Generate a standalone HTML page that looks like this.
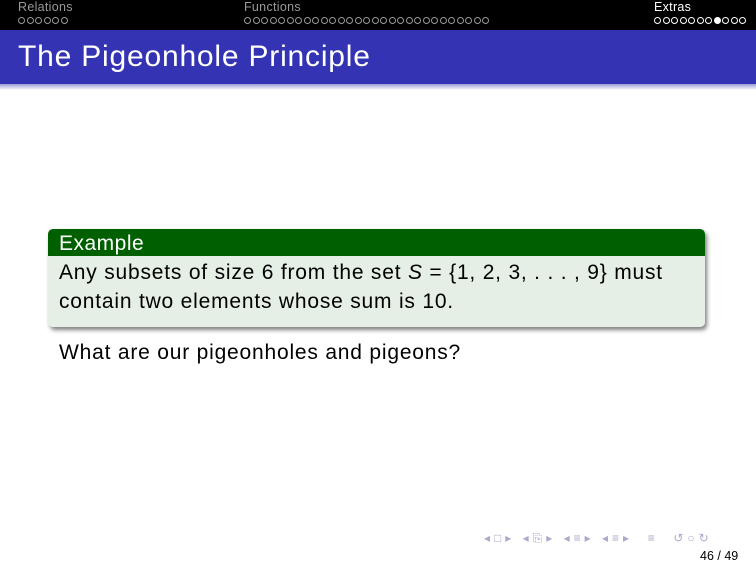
<!DOCTYPE html>
<html><head><style>
body{margin:0;width:756px;height:567px;background:#fff;position:relative;overflow:hidden;font-family:"Liberation Sans",sans-serif;}
.top{position:absolute;left:0;top:0;width:756px;height:30px;background:#000;}
.nav{position:absolute;font-size:12.5px;color:#999;line-height:13px;letter-spacing:0.3px;}
.dots{position:absolute;top:17px;display:flex;}
.dots i{display:block;width:5px;height:5px;border:1px solid #999;border-radius:50%;margin-right:1.5px;}
.dots.w i{border-color:#fff;}
.dots i.f{background:#fff;}
.title{position:absolute;left:0;top:30px;width:756px;height:54px;background:#3333b3;}
.title span{position:absolute;left:18px;top:10px;font-size:30px;color:#fff;letter-spacing:0.8px;}
.shadow{position:absolute;left:0;top:84px;width:756px;height:6px;background:linear-gradient(#9b9bd6,#fff);}
.blk{position:absolute;left:48px;top:229px;width:657px;height:98px;border-radius:5px;box-shadow:2px 3px 4px rgba(0,0,0,.5);overflow:hidden;}
.bh{height:27px;background:#006000;color:#fff;font-size:21px;line-height:29px;padding-left:11px;letter-spacing:0.5px;}
.bb{height:71px;background:#e5efe5;color:#000;font-size:21px;line-height:29px;padding:2px 11px 0;letter-spacing:0.8px;}
.q{position:absolute;left:59px;top:341px;font-size:21px;letter-spacing:0.8px;}
.ic{position:absolute;left:484px;top:531px;font-size:12px;color:#aac;letter-spacing:4px;}
.pg{position:absolute;left:700px;top:549px;font-size:12.5px;}
</style></head><body>
<div class="top"></div>
<div class="nav" style="left:18px;top:1px">Relations</div>
<div class="dots" style="left:18px"><i></i><i></i><i></i><i></i><i></i><i></i></div>
<div class="nav" style="left:244px;top:1px">Functions</div>
<div class="dots" style="left:244px"><i></i><i></i><i></i><i></i><i></i><i></i><i></i><i></i><i></i><i></i><i></i><i></i><i></i><i></i><i></i><i></i><i></i><i></i><i></i><i></i><i></i><i></i><i></i><i></i><i></i><i></i><i></i><i></i><i></i></div>
<div class="nav" style="left:654px;top:1px;color:#fff">Extras</div>
<div class="dots w" style="left:654px"><i></i><i></i><i></i><i></i><i></i><i></i><i></i><i class="f"></i><i></i><i></i><i></i></div>
<div class="title"><span>The Pigeonhole Principle</span></div>
<div class="shadow"></div>
<div class="blk"><div class="bh">Example</div><div class="bb">Any subsets of size 6 from the set <i>S</i> = {1, 2, 3, . . . , 9} must<br>contain two elements whose sum is 10.</div></div>
<div class="q">What are our pigeonholes and pigeons?</div>
<div class="ic">◂□▸ ◂⎘▸ ◂≡▸ ◂≡▸ &nbsp;≡ &nbsp;↺○↻</div>
<div class="pg">46 / 49</div>
</body></html>
